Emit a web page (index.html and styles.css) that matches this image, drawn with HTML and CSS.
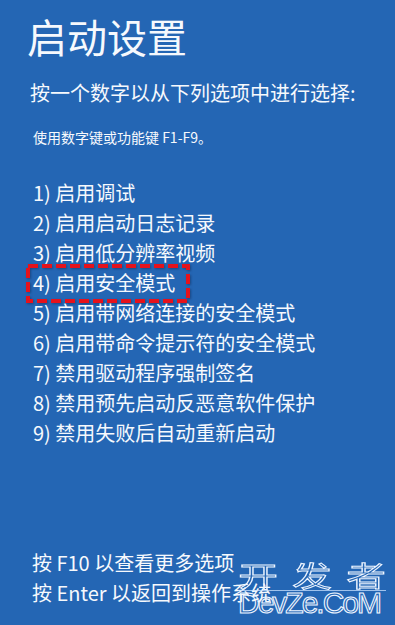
FILE: index.html
```html
<!DOCTYPE html>
<html lang="zh-CN">
<head>
<meta charset="utf-8">
<title>启动设置</title>
<link rel="stylesheet" href="styles.css">
</head>
<body>
<main class="screen">
  <h1 class="title">启动设置</h1>
  <p class="lead">按一个数字以从下列选项中进行选择:</p>
  <p class="hint">使用数字键或功能键 F1-F9。</p>
  <ol class="options">
    <li>1) 启用调试</li>
    <li>2) 启用启动日志记录</li>
    <li>3) 启用低分辨率视频</li>
    <li class="picked">4) 启用安全模式
      <svg class="mark" width="164" height="39" viewBox="0 0 164 39" aria-hidden="true">
        <rect x="2" y="2" width="160" height="35" fill="none" stroke="#e5121c" stroke-width="4" stroke-dasharray="10 4"/>
      </svg>
    </li>
    <li>5) 启用带网络连接的安全模式</li>
    <li>6) 启用带命令提示符的安全模式</li>
    <li>7) 禁用驱动程序强制签名</li>
    <li>8) 禁用预先启动反恶意软件保护</li>
    <li>9) 禁用失败后自动重新启动</li>
  </ol>
  <div class="footer">
    <p>按 F10 以查看更多选项</p>
    <p>按 Enter 以返回到操作系统</p>
  </div>
  <div class="watermark" aria-hidden="true">
    <div class="wm-cn"><span>开</span><span>发</span><span>者</span></div>
    <div class="wm-en">DevZe.CoM</div>
  </div>
</main>
</body>
</html>
```
FILE: styles.css
```css
* { box-sizing: border-box; }

html, body {
  margin: 0;
  padding: 0;
  background: #2466b4;
}

.screen {
  position: relative;
  width: 395px;
  height: 625px;
  overflow: hidden;
  display: flex;
  flex-direction: column;
  padding: 16px 0 17px 32px;
  background: #2466b4;
  color: #f6f9fd;
  font-family: "Noto Sans CJK SC", "Noto Sans", sans-serif;
}

.title {
  margin: 0 0 0 -5px;
  font-size: 40px;
  line-height: 40px;
  font-weight: 400;
}

.lead {
  margin: 27px 0 0 -2px;
  font-size: 20px;
  line-height: 20px;
}

.hint {
  margin: 27px 0 0 1px;
  font-size: 14px;
  line-height: 14px;
}

.options {
  list-style: none;
  margin: 34px 0 0 0;
  padding: 0 0 0 1px;
  font-size: 20px;
  line-height: 30px;
}

.options li {
  position: relative;
  white-space: nowrap;
}

.mark {
  position: absolute;
  left: -7px;
  top: -4px;
  filter: drop-shadow(1px 1px 1px rgba(10, 30, 70, 0.45));
}

.footer {
  margin-top: auto;
  font-size: 20px;
  line-height: 30px;
}

.footer p {
  margin: 0;
}

.watermark {
  position: absolute;
  left: 238px;
  top: 560px;
  width: 148px;
  color: transparent;
}

.wm-cn {
  display: flex;
  justify-content: space-between;
  height: 31px;
  padding: 0 6px;
  font-size: 28px;
  line-height: 30px;
  border-bottom: 1px solid rgba(200, 225, 255, 0.75);
}

.wm-cn span {
  display: inline-block;
  transform: scaleX(1.4);
  transform-origin: center top;
  -webkit-text-stroke: 1px #eef5ff;
}

.wm-en {
  font-family: "Liberation Sans", Arial, sans-serif;
  font-size: 30px;
  line-height: 24px;
  letter-spacing: -2px;
  white-space: nowrap;
  -webkit-text-stroke: 1.1px #eef5ff;
}
```
